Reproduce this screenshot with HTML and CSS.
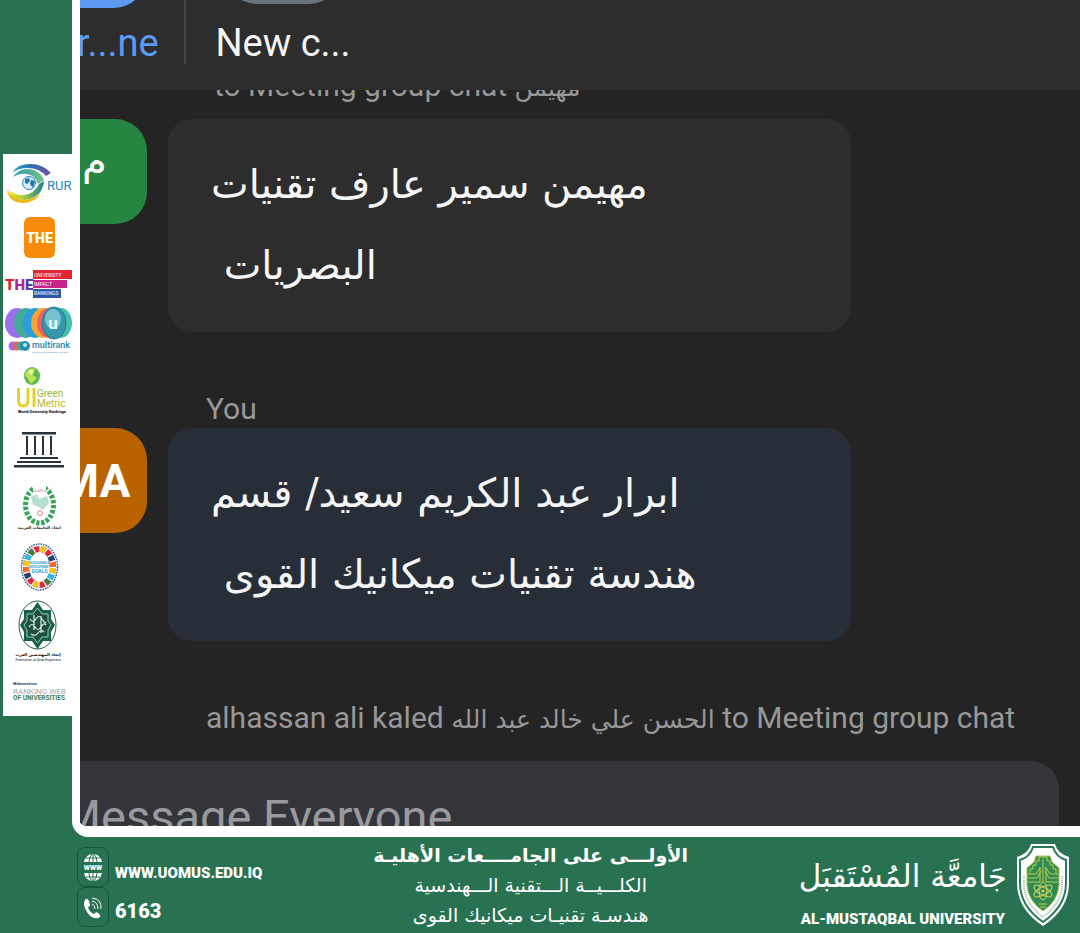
FILE: index.html
```html
<!DOCTYPE html>
<html lang="en">
<head>
<meta charset="utf-8">
<title>Al-Mustaqbal University</title>
<link rel="stylesheet" href="styles.css">
</head>
<body>
<div class="stage">
  <aside class="rail">
    <div class="logos">
      <svg viewBox="3 154 69 56" role="img" aria-label="RUR">
        <defs>
          <linearGradient id="top"><stop offset="0" stop-color="#27a7c4"/><stop offset=".5" stop-color="#2a6fb4"/><stop offset="1" stop-color="#7a4fa0"/></linearGradient>
          <linearGradient id="inner"><stop offset="0" stop-color="#2c9ab8"/><stop offset="1" stop-color="#74c485"/></linearGradient>
          <linearGradient id="low"><stop offset="0" stop-color="#fbe20a"/><stop offset=".4" stop-color="#b5cf3c"/><stop offset="1" stop-color="#147d9c"/></linearGradient>
        </defs>
        <path d="M12 173Q17 164 30 164Q43 164 51 173L46 176Q39 168 28 168Q18 168 12 173Z" fill="url(#top)"/>
        <path d="M13 177Q19 168 29 169Q40 170 44 180L38 184Q34 174 26 174Q19 173 13 177Z" fill="url(#inner)"/>
        <path d="M8 189Q14 196 24 195Q34 194 39 184L44 181Q42 198 25 200Q12 201 8 189Z" fill="url(#low)"/>
        <path d="M7 190Q12 199 23 200Q33 200 41 193Q36 202 24 203Q9 203 7 190Z" fill="#f0ba16"/>
        <circle cx="29" cy="183" r="6.500" fill="#d9edf7" stroke="#2583bd"/>
        <path d="M25 179L29 178L30 181L27 184L25 183ZM31 180L35 181L33 188L30 184Z" fill="#1f73b5"/>
        <text x="47" y="190" class="rur">RUR</text>
      </svg>
      <svg viewBox="3 210 69 53" role="img" aria-label="Times Higher Education">
        <rect x="24" y="217" width="31" height="41" rx="6" fill="#f68b0c"/>
        <text x="39.500" y="243" class="the" font-size="14" fill="#fff" text-anchor="middle">THE</text>
      </svg>
      <svg viewBox="3 263 69 40" role="img" aria-label="THE University Impact Rankings">
        <text x="5" y="290" class="the" font-size="15"><tspan fill="#e01f35">T</tspan><tspan fill="#b0249a">H</tspan><tspan fill="#4b3fa8">E</tspan></text>
        <rect x="33" y="270" width="39" height="9" fill="#e02632"/><rect x="33" y="280" width="34" height="8" fill="#c9248c"/><rect x="33" y="289" width="28" height="9" fill="#2f57a5"/>
        <g class="impact"><text x="34" y="277">UNIVERSITY</text><text x="34" y="286">IMPACT</text><text x="34" y="295">RANKINGS</text></g>
      </svg>
      <svg viewBox="3 303 69 57" role="img" aria-label="U-Multirank">
        <ellipse cx="17" cy="323" rx="12" ry="15" fill="#9a70eb"/><ellipse cx="26" cy="323" rx="12" ry="15" fill="#43ac99"/><ellipse cx="35" cy="323" rx="12" ry="15" fill="#289edf"/><ellipse cx="43" cy="323" rx="12" ry="15" fill="#f6a532"/><ellipse cx="49" cy="323" rx="12" ry="15" fill="#f4605e"/><ellipse cx="61" cy="323" rx="11" ry="15" fill="#43c0ac"/><ellipse cx="54" cy="323" rx="12" ry="16" fill="#3796ad" stroke="#237990"/><ellipse cx="53" cy="319" rx="8" ry="10" fill="#77c2d0"/>
        <text x="53" y="329" font-size="17" font-weight="700" fill="#e7f7fa" text-anchor="middle">u</text>
        <circle cx="13" cy="346" r="4.500" fill="#9a70eb"/><circle cx="17" cy="346" r="4.500" fill="#f4605e"/><circle cx="21" cy="346" r="4.500" fill="#43ac99"/><circle cx="25" cy="346" r="5" fill="#288cb0"/><circle cx="25" cy="345" r="2" fill="#c2e6ed"/>
        <text x="32" y="348" font-size="9" font-weight="500" fill="#2786ac">multirank</text>
        <text x="32" y="353" font-size="2.500" fill="#2b9ed0">Universities compared. Your way.</text>
      </svg>
      <svg viewBox="3 360 69 61" role="img" aria-label="UI GreenMetric">
        <ellipse cx="32" cy="376" rx="8" ry="9" fill="#55b94b"/><path d="M25 375Q28 366 36 369L32 374L37 378L31 384Q28 379 25 375Z" fill="#bfdf55"/><circle cx="31" cy="372" r="2.500" fill="#e8f5a8"/>
        <path d="M18.500 388V400Q18.500 406 23 406Q28 406 28 400V388M34 388V407" fill="none" stroke="#e6cf27" stroke-width="3"/>
        <text x="37" y="397" font-size="10" fill="#8fb93c">Green</text><text x="37" y="407" font-size="10" fill="#b7b831">Metric</text>
        <text x="18" y="413" font-size="4" font-weight="900" fill="#222">World University Rankings</text>
      </svg>
      <svg viewBox="3 421 69 56" role="img" aria-label="UNESCO" fill="#26343e">
        <path d="M22 432h34v2.500H22zM20 457h38v2H20zM17 461h44v2H17zM14 465h50v2.500H14z"/><path d="M26 436h2v19H26zM34 436h2v19H34zM42 436h2v19H42zM50 436h2v19H50z"/>
      </svg>
      <svg viewBox="3 477 69 60" role="img" aria-label="اتحاد الجامعات العربية">
        <ellipse cx="39.500" cy="505" rx="14" ry="18" fill="none" stroke="#36a45b" stroke-width="5" stroke-dasharray="3 1.500" pathLength="90"/>
        <path d="M33 484h13v7H33z" fill="#fff"/>
        <path d="M31 497L37 494L39 499L47 496L49 503L43 510L39 507L33 505Z" fill="#b7ddd2"/>
        <text x="39.500" y="492" font-size="4" fill="#e58a8a" text-anchor="middle">AARU</text><circle cx="40" cy="513" r="2.500" fill="none" stroke="#dd8585"/>
        <text x="39.500" y="529" font-size="4" class="ar" text-anchor="middle" font-weight="700" fill="#222">اتحاد الجامعات العربية</text>
      </svg>
      <svg viewBox="3 537 69 59" role="img" aria-label="Sustainable Development Goals">
        <ellipse cx="39.500" cy="567" rx="18" ry="23" fill="none" stroke="#2d5c9b" stroke-width="1.500" stroke-dasharray="1.500 1"/>
        <g fill="none" stroke-width="6">
          <ellipse cx="39.500" cy="567" rx="13.500" ry="18" stroke="#e5243b"/>
          <ellipse cx="39.500" cy="567" rx="13.500" ry="18" stroke="#fcc30b" pathLength="80" stroke-dasharray="5 15"/>
          <ellipse cx="39.500" cy="567" rx="13.500" ry="18" stroke="#26bde2" pathLength="80" stroke-dasharray="5 35" stroke-dashoffset="-5"/>
          <ellipse cx="39.500" cy="567" rx="13.500" ry="18" stroke="#3f7e44" pathLength="80" stroke-dasharray="5 35" stroke-dashoffset="-10"/>
          <ellipse cx="39.500" cy="567" rx="13.500" ry="18" stroke="#19486a" pathLength="80" stroke-dasharray="5 35" stroke-dashoffset="-30"/>
          <ellipse cx="39.500" cy="567" rx="13.500" ry="18" stroke="#fd6925" pathLength="80" stroke-dasharray="5 35" stroke-dashoffset="-35"/>
          <ellipse cx="39.500" cy="567" rx="13.500" ry="18" stroke="#fff" pathLength="80" stroke-dasharray="1 4"/>
        </g>
        <g text-anchor="middle" fill="#2b9dd0" font-weight="700"><text x="39.500" y="564" font-size="3">SUSTAINABLE</text><text x="39.500" y="568" font-size="3">DEVELOPMENT</text><text x="39.500" y="573" font-size="5">GOALS</text></g>
      </svg>
      <svg viewBox="3 596 69 75" role="img" aria-label="Federation of Arab Engineers">
        <ellipse cx="37.500" cy="625" rx="18.500" ry="24" fill="#fff" stroke="#245e49"/>
        <path d="M37.500 602L43 610H51V619L55 625L51 632V641H43L37.500 649L32 641H24V632L20 625L24 619V610H32Z" fill="#176044"/>
        <path d="M37.500 608L42 614H48V621L51 625L48 630V637H42L37.500 643L33 637H27V630L24 625L27 621V614H33Z" fill="#1e4f3e" stroke="#9ec8b5"/>
        <path d="M30 619q3 5 6 0t6 0t4 3M29 627q3-5 6 0t6 0t5-2M31 634q4 3 7-1t6-1M34 615v15M41 616v17" fill="none" stroke="#e4f0ea" stroke-width="1.200"/>
        <text x="38" y="656" font-size="4" class="ar" font-weight="700" text-anchor="middle">إتحاد المهندسين العرب</text>
        <text x="38" y="661" font-size="3.500" text-anchor="middle" fill="#222">Federation of Arab Engineers</text>
      </svg>
      <svg viewBox="3 671 69 45" role="img" aria-label="Webometrics Ranking Web of Universities">
        <text x="13" y="685" font-size="4" font-weight="900" fill="#41527c">Webometrics</text>
        <text x="13" y="694" font-size="8" fill="#a3a7a7">RANKING WEB</text>
        <text x="13" y="700" font-size="6.500" font-weight="700" fill="#407a50">OF UNIVERSITIES</text>
      </svg>
    </div>
  </aside>
  <main class="frame">
    <div class="app">
      <nav class="tabs">
        <button class="tab tab-active"><span class="tab-icon"></span>Ever...ne</button>
        <button class="tab"><span class="tab-icon tab-icon-gray"></span>New c...</button>
      </nav>
      <section class="chat">
        <p class="who who-reply">to Meeting group chat <span class="ar">مهيمن</span></p>
        <div class="message">
          <div class="avatar avatar-green ar">م</div>
          <p class="bubble ar" dir="rtl">مهيمن سمير عارف تقنيات<br>البصريات&nbsp;</p>
        </div>
        <p class="who">You</p>
        <div class="message">
          <div class="avatar avatar-orange">MA</div>
          <p class="bubble bubble-own ar" dir="rtl">ابرار عبد الكريم سعيد/ قسم<br>هندسة تقنيات ميكانيك القوى&nbsp;</p>
        </div>
        <p class="who">alhassan ali kaled <span class="ar">الحسن علي خالد عبد الله</span> to Meeting group chat</p>
      </section>
      <div class="compose"><input type="text" placeholder="Message Everyone" aria-label="Message Everyone"></div>
    </div>
  </main>
</div>
<footer class="footer">
  <address class="contacts">
    <a class="contact web" href="#">
      <span class="badge"><svg viewBox="0 0 22 28" width="22" height="28"><path d="M2 9Q4 1 11 1T20 9ZM2 20Q4 28 11 28T20 20Z" fill="#fff"/><path d="M11 1V9M7 9Q7 4 10 1M15 9Q15 4 12 1M4 5H18M11 20V28M7 20Q7 25 10 28M15 20Q15 25 12 28M4 24H18" fill="none" stroke="#287251"/><text x="11" y="17" text-anchor="middle" font-size="7" font-weight="900" fill="#fff">WWW</text></svg></span>
      WWW.UOMUS.EDU.IQ</a>
    <a class="contact phone" href="#">
      <span class="badge"><svg viewBox="0 0 22 28" width="22" height="28"><path d="M3 7Q5 4 7 8L8 12Q8 14 6 14Q7 19 12 21Q14 18 16 20L18 22Q19 24 16 25Q9 26 5 19Q0 11 3 7Z" fill="#fff"/><path d="M10 11Q13 12 13 16M10 8Q16 9 16 16M10 5Q20 6 19 16" fill="none" stroke="#fff"/></svg></span>
      6163</a>
  </address>
  <div class="motto ar" dir="rtl">
    <strong>الأولـــى على الجامــــعات الأهليـة</strong>
    <span>الكلـــيــة الـــتقنية الـــهندسية</span>
    <span>هندسـة تقنيـات ميكانيك القوى</span>
  </div>
  <div class="brand">
    <div class="brand-name">
      <span class="brand-ar ar" dir="rtl">جَامعَّة المُسْتَقبَل</span>
      <span class="brand-en">AL-MUSTAQBAL UNIVERSITY</span>
    </div>
    <svg class="shield" viewBox="0 0 54 84" role="img" aria-label="University crest">
      <path d="M15 1H39Q41 10 53 14V40Q53 66 27 83Q1 66 1 40V14Q13 10 15 1Z" fill="#fff"/>
      <path d="M17 4H37Q40 14 50 17V40Q50 63 27 79Q4 63 4 40V17Q14 14 17 4Z" fill="none" stroke="#287a59" stroke-width="2"/>
      <path d="M8 33V43Q9 60 27 74Q45 60 46 43V33" fill="none" stroke="#a6b9b0" stroke-width="2" stroke-dasharray="1 1"/>
      <path d="M20 13H34L36 19L43 25V42Q42 58 27 68Q12 58 11 42V25L18 19Z" fill="#2f8b54" stroke="#a9c84c"/>
      <path d="M23 14H31V18H34V22H37V26H40V30M23 14V18H20V22H17V26H14V30M12 31H20L24 25M42 31H34L30 25M12 35H21L25 28M42 35H33L29 28M12 39H24V24M42 39H30V24M27 16V39" fill="none" stroke="#c6cc48"/>
      <g fill="none" stroke="#d9d05a"><ellipse cx="27" cy="48" rx="10" ry="4" transform="rotate(28 27 48)"/><ellipse cx="27" cy="48" rx="10" ry="4" transform="rotate(-28 27 48)"/><ellipse cx="27" cy="48" rx="4" ry="9"/></g>
      <circle cx="27" cy="48" r="1.500" fill="#d9d05a"/><path d="M23 61H31M24 64H30" stroke="#d9d05a"/>
    </svg>
  </div>
</footer>
</body>
</html>
```
FILE: styles.css
```css
* { box-sizing: border-box; }
body {
  margin: 0;
  height: 100vh;
  display: flex;
  flex-direction: column;
  background: #287251;
  font-family: Roboto, "DejaVu Sans", sans-serif;
}
p { margin: 0; }
.ar { font-family: "DejaVu Sans", sans-serif; }
.stage { flex: 1; display: flex; min-height: 0; }
.rail { width: 72px; flex: none; padding: 154px 0 0 3px; }
.logos { background: #fff; display: flex; flex-direction: column; }
.logos svg { display: block; width: 100%; }
.rur { font-size: 13px; fill: #2586c5; }
.the { font-family: Roboto, sans-serif; font-weight: 900; }
.impact { font-size: 5px; fill: #fff; }

.frame {
  flex: 1;
  min-width: 0;
  display: flex;
  overflow: hidden;
  border: solid #fff;
  border-width: 0 0 11px 8px;
  border-bottom-left-radius: 16px;
}
.app {
  flex: 1;
  min-width: 0;
  margin-left: -88px;
  display: flex;
  flex-direction: column;
  background: #242424;
}
.tabs {
  flex: none;
  height: 90px;
  padding-bottom: 26px;
  display: flex;
  overflow: hidden;
  background: #2d2d2d;
}
.tab {
  width: 194px;
  padding: 0;
  border: 0;
  display: flex;
  flex-direction: column;
  align-items: center;
  justify-content: flex-end;
  gap: 14px;
  background: none;
  color: #f5f5f5;
  font: 400 38px/42px Roboto, sans-serif;
}
.tab-active { color: #5b9bf3; border-right: 2px solid #454545; }
.tab-icon { width: 116px; height: 104px; flex: none; border-radius: 32px; background: #5b9bf3; }
.tab-icon-gray { background: #6a737d; margin-bottom: 4px; }

.chat {
  flex: 1;
  min-height: 0;
  overflow: hidden;
  display: flex;
  flex-direction: column;
  justify-content: flex-end;
  padding-bottom: 24px;
}
.who {
  flex: none;
  padding-left: 214px;
  color: #989898;
  font-size: 30px;
  line-height: 38px;
  white-space: nowrap;
}
.who-reply { padding-left: 222px; margin-bottom: 14px; }
.who .ar { font-size: 25px; line-height: 30px; }
.message { flex: none; display: flex; align-items: flex-start; gap: 21px; padding-left: 50px; margin-bottom: 58px; }
.avatar {
  width: 105px;
  height: 105px;
  flex: none;
  display: grid;
  place-items: center;
  border-radius: 32px;
  color: #fff;
  font-size: 46px;
  font-weight: 700;
}
.avatar.ar { font-size: 40px; font-weight: 400; padding-bottom: 24px; }
.avatar-green { background: #268541; }
.avatar-orange { background: #b86200; }
.bubble {
  flex: 0 1 683px;
  padding: 25px 43px 26px;
  border-radius: 24px;
  background: #2d2d2d;
  color: #f5f5f5;
  font-size: 40px;
  line-height: 81px;
  text-align: left;
  white-space: nowrap;
}
.bubble-own { background: #282e38; }
.compose {
  flex: none;
  height: 65px;
  margin: 0 21px 0 46px;
  padding: 28px 22px 0;
  overflow: hidden;
  border-radius: 28px 28px 0 0;
  background: #33353a;
}
.compose input {
  display: block;
  width: 100%;
  height: 56px;
  padding: 0;
  border: 0;
  background: none;
  color: #fff;
  font: 400 47px/56px Roboto, sans-serif;
}
.compose input::placeholder { color: #989a9d; opacity: 1; }

.footer {
  flex: none;
  height: 96px;
  padding: 0 10px 0 77px;
  display: flex;
  justify-content: space-between;
  align-items: center;
  color: #fff;
}
.contacts { font-style: normal; padding-top: 4px; }
.contact { display: flex; align-items: flex-end; gap: 6px; color: #fff; text-decoration: none; }
.badge { width: 32px; height: 40px; display: grid; place-items: center; border: 1px solid #17553a; border-radius: 8px; }
.web { font: 900 15px/28px Roboto, sans-serif; }
.phone { font: 900 20px/32px Roboto, sans-serif; }
.motto { display: flex; flex-direction: column; align-items: center; font-size: 19px; line-height: 30px; white-space: nowrap; }
.motto strong { font-size: 19px; }
.brand { display: flex; justify-content: flex-end; align-items: center; gap: 9px; }
.brand-name { display: flex; flex-direction: column; align-items: center; white-space: nowrap; }
.brand-ar { font-size: 31px; line-height: 68px; }
.brand-en { font: 900 15px/18px Roboto, sans-serif; }
.shield { width: 54px; height: 84px; }
```
